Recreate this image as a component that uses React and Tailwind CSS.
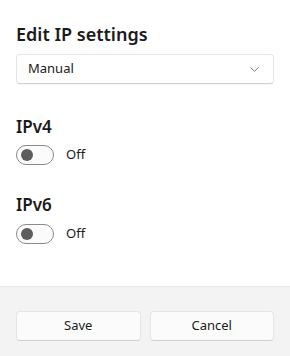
import React from 'react';

function Toggle() {
  return (
    <div className="flex items-center gap-3">
      <div className="flex h-[20px] w-[38px] items-center rounded-full border border-[#8a8a8a] bg-[#fbfbfb] px-[4px]">
        <div className="h-[12px] w-[12px] rounded-full bg-[#5d5d5d]" />
      </div>
      <span className="text-[13px] text-[#1b1b1b]">Off</span>
    </div>
  );
}

export default function App() {
  return (
    <div className="flex h-[356px] w-[290px] flex-col bg-white text-[#1b1b1b]" style={{ fontFamily: '"Noto Sans", "Open Sans", sans-serif' }}>
      <div className="flex-1 px-4 pt-[20px]">
        <h1 className="text-[18px] font-semibold leading-[28px]">Edit IP settings</h1>
        <div className="mt-[6px] flex h-[30px] items-center justify-between rounded-[4px] border border-[#e5e5e5] border-b-[#d0d0d0] bg-white pl-[11px] pr-[14px] shadow-[0_1px_1px_rgba(0,0,0,0.04)]">
          <span className="text-[13px]">Manual</span>
          <svg width="9" height="5" viewBox="0 0 9 5" fill="none">
            <path d="M0.75 0.75l3.75 3.5 3.75-3.5" stroke="#7a7a7a" strokeWidth="1" strokeLinecap="round" strokeLinejoin="round" />
          </svg>
        </div>

        <h2 className="mt-[31px] text-[17px] font-semibold leading-[24px]">IPv4</h2>
        <div className="mt-[6px]">
          <Toggle />
        </div>

        <h2 className="mt-[28px] text-[17px] font-semibold leading-[24px]">IPv6</h2>
        <div className="mt-[7px]">
          <Toggle />
        </div>
      </div>

      <div className="flex h-[70px] gap-[9px] border-t border-[#e8e8e8] bg-[#f3f3f3] px-4 pt-[24px]">
        <button className="h-[30px] flex-1 rounded-[4px] border border-[#e5e5e5] border-b-[#d0d0d0] bg-[#fbfbfb] text-[13px] text-[#1b1b1b]">Save</button>
        <button className="h-[30px] flex-1 rounded-[4px] border border-[#e5e5e5] border-b-[#d0d0d0] bg-[#fbfbfb] text-[13px] text-[#1b1b1b]">Cancel</button>
      </div>
    </div>
  );
}
